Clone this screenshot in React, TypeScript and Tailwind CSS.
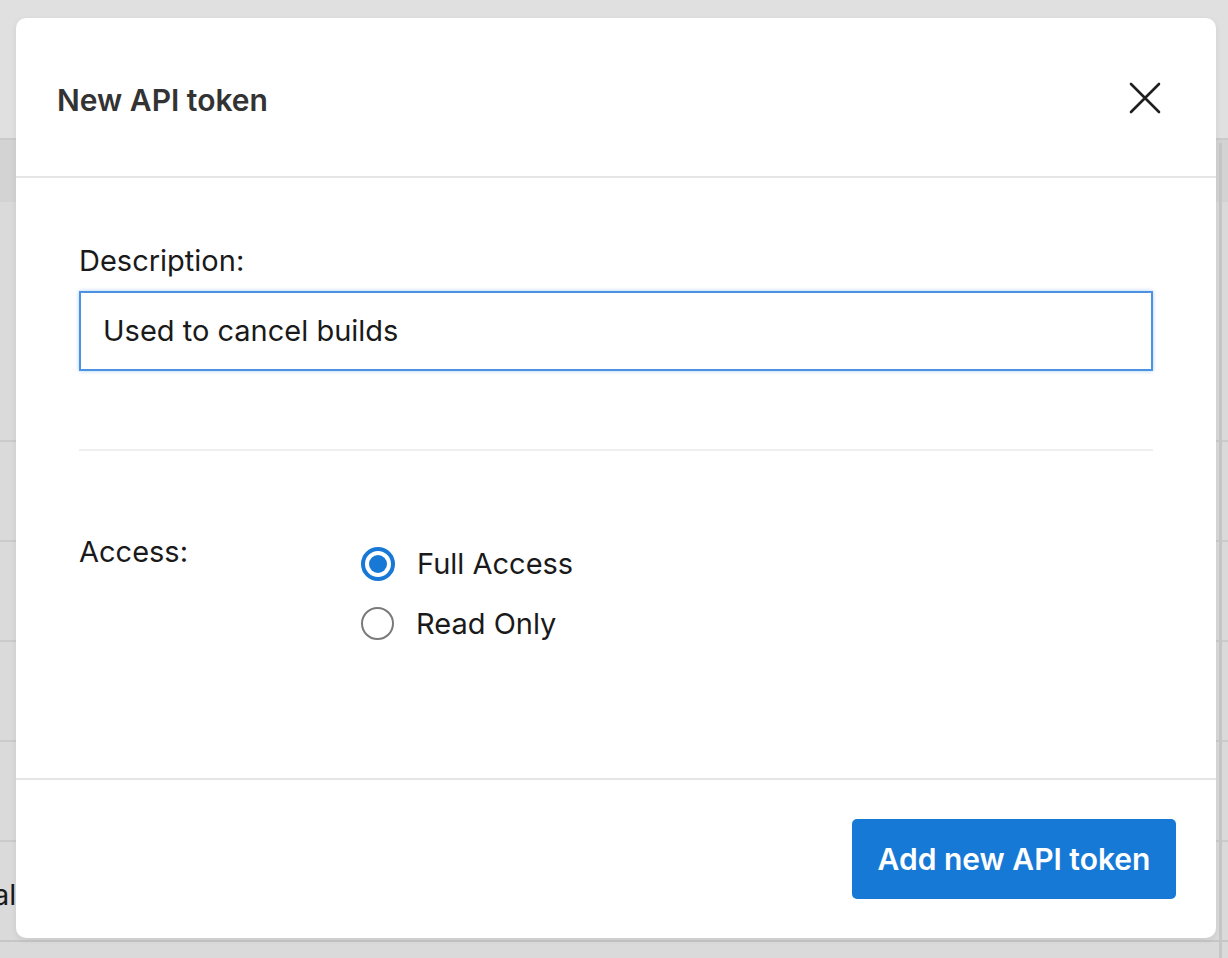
import React from "react";

const rows = [240, 100, 100, 100, 100];

const App = () => {
    return (
        <div
            className="relative w-[1228px] h-[958px] overflow-hidden bg-[#dadada]"
            style={{ fontFamily: "Inter, 'Noto Sans', sans-serif" }}
        >
            {/* Page behind the overlay */}
            <div className="flex flex-col">
                <div className="h-[140px] bg-[#e0e0e0] border-b-2 border-[#cacaca]" />
                <div className="h-[62px] bg-[#d3d3d3]" />
                {rows.map((h, i) => (
                    <div
                        key={i}
                        className="border-b-2 border-[#cbcbcb] bg-[#dadada]"
                        style={{ height: h }}
                    />
                ))}
                <div className="h-[100px] flex items-center text-[29px] text-[#1a1a1a] -ml-[7px] border-b-2 border-[#c6c6c6]">
                    <span className="mt-[8px]">al</span>
                </div>
                <div className="flex-1 bg-[#d6d6d6]" />
            </div>
            <div className="absolute top-[143px] right-[6px] bottom-0 w-[3px] bg-[#c6c6c6]" />

            {/* Modal */}
            <div className="absolute left-[16px] top-[18px] w-[1200px] h-[920px] bg-white rounded-[10px] flex flex-col shadow-[0_2px_6px_rgba(0,0,0,0.08)]">
                {/* Header */}
                <div className="h-[160px] flex items-center justify-between pl-[41px] pr-[55px] border-b-2 border-[#e6e6e6] shrink-0">
                    <h2 className="text-[30px] font-semibold text-[#333333] mt-[6px]">New API token</h2>
                    <svg width="32" height="32" viewBox="0 0 32 32" className="mt-[1px]">
                        <path d="M2 2 L30 30 M30 2 L2 30" stroke="#1f1f1f" strokeWidth="2.6" strokeLinecap="round" />
                    </svg>
                </div>

                {/* Body */}
                <div className="flex-1 px-[63px] pt-[67px]">
                    <label className="block text-[29px] leading-[32px] text-[#1a1a1a]">Description:</label>
                    <div className="mt-[14px] h-[80px] border-2 border-[#4b93e0] shadow-[0_0_4px_rgba(74,144,226,0.45)] flex items-center px-[22px]">
                        <span className="text-[29px] text-[#1a1a1a]">Used to cancel builds</span>
                    </div>

                    <div className="mt-[78px] h-[2px] bg-[#efefef]" />

                    <div className="mt-[85px] flex">
                        <div className="w-[282px] text-[29px] leading-[32px] text-[#1a1a1a]">Access:</div>
                        <div className="flex flex-col gap-[26px] mt-[11px]">
                            <div className="flex items-center gap-[22px]">
                                <span className="w-[34px] h-[34px] rounded-full border-[4px] border-[#1778d6] flex items-center justify-center">
                                    <span className="w-[18px] h-[18px] rounded-full bg-[#1778d6]" />
                                </span>
                                <span className="text-[29px] leading-[32px] text-[#1a1a1a]">Full Access</span>
                            </div>
                            <div className="flex items-center gap-[22px]">
                                <span className="w-[33px] h-[33px] rounded-full border-2 border-[#7a7a7a] bg-white" />
                                <span className="text-[29px] leading-[32px] text-[#1a1a1a]">Read Only</span>
                            </div>
                        </div>
                    </div>
                </div>

                {/* Footer */}
                <div className="h-[160px] border-t-2 border-[#e6e6e6] flex items-center justify-end pr-[40px] shrink-0">
                    <button className="w-[324px] h-[80px] rounded-[5px] bg-[#1679d6] text-white text-[30px] font-semibold">
                        Add new API token
                    </button>
                </div>
            </div>
        </div>
    );
};

export default App;
